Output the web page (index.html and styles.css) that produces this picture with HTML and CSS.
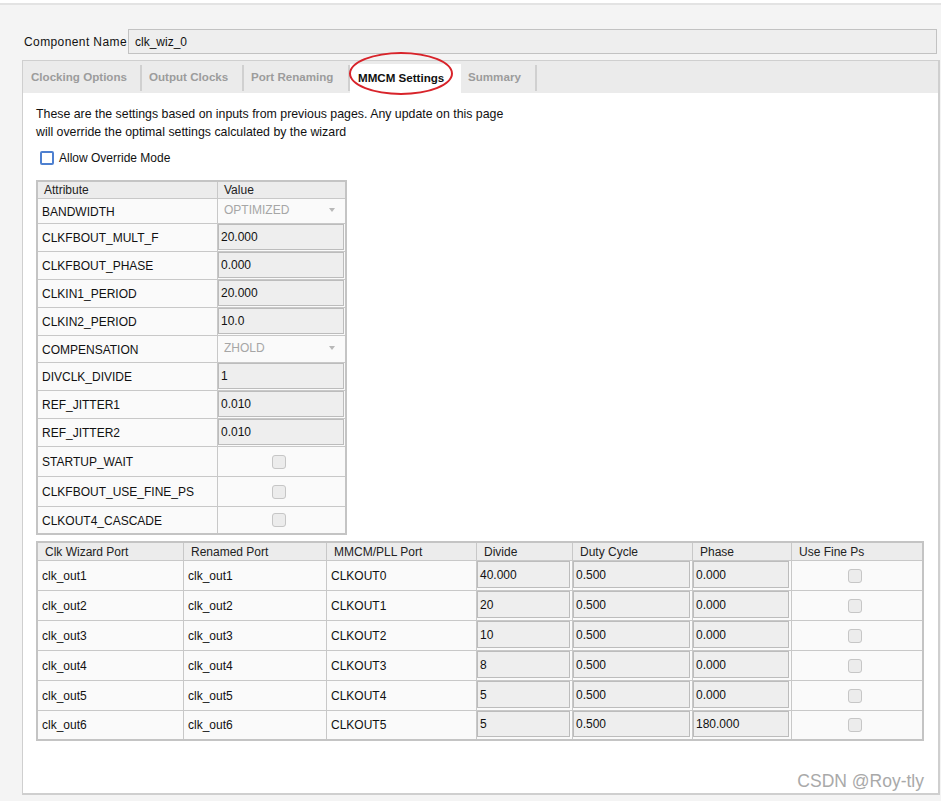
FILE: index.html
```html
<!DOCTYPE html>
<html>
<head>
<meta charset="utf-8">
<link rel="stylesheet" href="styles.css">
</head>
<body>
<div class="topbar"></div>
<div class="wrap">
  <div class="name-row">
    <div class="name-label">Component Name</div>
    <div class="name-input">clk_wiz_0</div>
  </div>
  <div class="panel">
    <div class="tabs">
      <div class="tab t1">Clocking Options</div><span class="sep"></span>
      <div class="tab t2">Output Clocks</div><span class="sep"></span>
      <div class="tab t3">Port Renaming</div><span class="sep"></span>
      <div class="tab t4">MMCM Settings</div>
      <div class="tab t5">Summary</div><span class="sep"></span>
    </div>
    <div class="ellipse"></div>
    <div class="content">
      <p class="intro">These are the settings based on inputs from previous pages. Any update on this page<br>will override the optimal settings calculated by the wizard</p>
      <div class="override"><span class="cb-blue"></span>Allow Override Mode</div>

      <div class="attr">
        <div class="arow ahead h17"><div>Attribute</div><div class="hv">Value</div></div>
        <div class="arow h25"><div>BANDWIDTH</div><div class="dd"><span>OPTIMIZED</span><span class="arrow"></span></div></div>
        <div class="arow h28"><div>CLKFBOUT_MULT_F</div><div class="fc"><div class="field">20.000</div></div></div>
        <div class="arow h28"><div>CLKFBOUT_PHASE</div><div class="fc"><div class="field">0.000</div></div></div>
        <div class="arow h28"><div>CLKIN1_PERIOD</div><div class="fc"><div class="field">20.000</div></div></div>
        <div class="arow h28"><div>CLKIN2_PERIOD</div><div class="fc"><div class="field">10.0</div></div></div>
        <div class="arow h27"><div>COMPENSATION</div><div class="dd"><span>ZHOLD</span><span class="arrow"></span></div></div>
        <div class="arow h28"><div>DIVCLK_DIVIDE</div><div class="fc"><div class="field">1</div></div></div>
        <div class="arow h28"><div>REF_JITTER1</div><div class="fc"><div class="field">0.010</div></div></div>
        <div class="arow h28"><div>REF_JITTER2</div><div class="fc"><div class="field">0.010</div></div></div>
        <div class="arow h30"><div>STARTUP_WAIT</div><div class="cc"><span class="chk"></span></div></div>
        <div class="arow h30"><div>CLKFBOUT_USE_FINE_PS</div><div class="cc"><span class="chk"></span></div></div>
        <div class="arow h26"><div>CLKOUT4_CASCADE</div><div class="cc"><span class="chk"></span></div></div>
      </div>

      <div class="ports">
        <div class="prow phead"><div>Clk Wizard Port</div><div>Renamed Port</div><div>MMCM/PLL Port</div><div>Divide</div><div>Duty Cycle</div><div>Phase</div><div class="uh">Use Fine Ps</div></div>
        <div class="prow"><div>clk_out1</div><div>clk_out1</div><div>CLKOUT0</div><div class="fc"><div class="field">40.000</div></div><div class="fc"><div class="field">0.500</div></div><div class="fc"><div class="field">0.000</div></div><div class="cc"><span class="chk"></span></div></div>
        <div class="prow"><div>clk_out2</div><div>clk_out2</div><div>CLKOUT1</div><div class="fc"><div class="field">20</div></div><div class="fc"><div class="field">0.500</div></div><div class="fc"><div class="field">0.000</div></div><div class="cc"><span class="chk"></span></div></div>
        <div class="prow"><div>clk_out3</div><div>clk_out3</div><div>CLKOUT2</div><div class="fc"><div class="field">10</div></div><div class="fc"><div class="field">0.500</div></div><div class="fc"><div class="field">0.000</div></div><div class="cc"><span class="chk"></span></div></div>
        <div class="prow"><div>clk_out4</div><div>clk_out4</div><div>CLKOUT3</div><div class="fc"><div class="field">8</div></div><div class="fc"><div class="field">0.500</div></div><div class="fc"><div class="field">0.000</div></div><div class="cc"><span class="chk"></span></div></div>
        <div class="prow"><div>clk_out5</div><div>clk_out5</div><div>CLKOUT4</div><div class="fc"><div class="field">5</div></div><div class="fc"><div class="field">0.500</div></div><div class="fc"><div class="field">0.000</div></div><div class="cc"><span class="chk"></span></div></div>
        <div class="prow plast"><div>clk_out6</div><div>clk_out6</div><div>CLKOUT5</div><div class="fc"><div class="field">5</div></div><div class="fc"><div class="field">0.500</div></div><div class="fc"><div class="field">180.000</div></div><div class="cc"><span class="chk"></span></div></div>
      </div>
    </div>
  </div>
</div>
<div class="watermark">CSDN @Roy-tly</div>
</body>
</html>
```

FILE: styles.css
```css
* { box-sizing: border-box; }

body {
  margin: 0;
  width: 941px;
  height: 801px;
  overflow: hidden;
  position: relative;
  background: #f4f4f4;
  font-family: "Liberation Sans", Arial, sans-serif;
  font-size: 12px;
  color: #111;
}

.topbar {
  height: 5px;
  background: #fff;
  border-bottom: 2px solid #e3e3e3;
}

.wrap {
  padding: 24px 1px 0 22px;
}

.name-row {
  display: flex;
  height: 25px;
}

.name-label {
  width: 106px;
  padding-left: 2px;
  display: flex;
  align-items: center;
  letter-spacing: 0.4px;
  color: #111;
}

.name-input {
  flex: 1;
  margin-right: 3px;
  border: 1px solid #c2c2c2;
  background: #eeeeee;
  display: flex;
  align-items: center;
  padding-left: 6px;
}

.panel {
  margin-top: 6px;
  height: 735px;
  border: 1px solid #cfcfcf;
  border-right-width: 2px;
  border-bottom-width: 2px;
  position: relative;
  display: flex;
  flex-direction: column;
  background: #fff;
}

.tabs {
  height: 32px;
  flex: none;
  display: flex;
  background: #ebebeb;
}

.tab {
  flex: none;
  padding-left: 7px;
  font-weight: bold;
  font-size: 11.6px;
  line-height: 31px;
  color: #9c9c9c;
  white-space: nowrap;
}

.t1 { width: 117px; padding-left: 8px; }
.t2 { width: 100px; }
.t3 { width: 104px; }
.t4 {
  width: 111px;
  padding-left: 8px;
  margin-top: 3px;
  line-height: 28px;
  background: #fff;
  color: #111;
}
.t5 { width: 74px; }

.sep {
  flex: none;
  width: 2px;
  height: 26px;
  margin-top: 4px;
  background: #d0d0d0;
}

.ellipse {
  position: absolute;
  left: 326px;
  top: -9px;
  width: 104px;
  height: 43px;
  border: 2px solid #d8232a;
  border-radius: 50%;
}

.content {
  flex: 1;
  padding: 11px 0 0 13px;
  background: #fff;
}

.intro {
  margin: 0;
  font-size: 12.35px;
  line-height: 18px;
  padding-top: 1px;
}

.override {
  margin-top: 8px;
  height: 18px;
  display: flex;
  align-items: center;
}

.cb-blue {
  width: 14px;
  height: 14px;
  margin-left: 4px;
  margin-right: 5px;
  border: 2px solid #4e80d0;
  border-radius: 2px;
  background: #fff;
}

/* attribute table */
.attr {
  margin-top: 13px;
  width: 311px;
  border: 2px solid #c4c4c4;
  background: #fafafa;
}

.arow {
  display: grid;
  grid-template-columns: 180px 1fr;
  border-bottom: 1px solid #c8c8c8;
}

.arow:last-child { border-bottom: none; }

.arow > div:first-child {
  border-right: 1px solid #c8c8c8;
  padding-left: 4px;
  padding-top: 1px;
  display: flex;
  align-items: center;
}

.ahead { background: #ececec; color: #222; }
.ahead > div:first-child { padding-left: 6px; padding-top: 0; }
.hv { padding-left: 6px; display: flex; align-items: center; }

.h17 { height: 17px; }
.h25 { height: 25px; }
.h26 { height: 26px; }
.h27 { height: 27px; }
.h28 { height: 28px; }
.h30 { height: 30px; }

.dd {
  display: flex;
  align-items: center;
  justify-content: space-between;
  padding: 0 10px 3px 6px;
  color: #a6a6a6;
}

.arrow {
  width: 0;
  height: 0;
  border-left: 3.5px solid transparent;
  border-right: 3.5px solid transparent;
  border-top: 4px solid #b8b8b8;
}

.fc {
  padding: 0 1px 1px 0;
}

.field {
  width: 100%;
  height: 100%;
  border: 1px solid #bcbcbc;
  background: #eeeeee;
  padding-left: 2px;
  display: flex;
  align-items: center;
}

.cc {
  display: flex;
  align-items: center;
  justify-content: center;
  padding-right: 5px;
}

.chk {
  width: 14px;
  height: 14px;
  border: 1px solid #c6c6c6;
  border-radius: 3px;
  background: #ececec;
}

/* ports table */
.ports {
  margin-top: 6px;
  width: 888px;
  border: 2px solid #c4c4c4;
  background: #fafafa;
}

.prow {
  display: grid;
  grid-template-columns: 146px 143px 150px 96px 120px 99px 1fr;
  height: 30px;
  border-bottom: 1px solid #c8c8c8;
}

.prow > div {
  border-right: 1px solid #c8c8c8;
  padding-left: 4px;
  display: flex;
  align-items: center;
}

.prow > div:last-child { border-right: none; }

.prow > .fc {
  padding: 0 2px 2px 0;
}

.prow > .cc {
  justify-content: center;
  padding-left: 0;
  padding-right: 4px;
}

.phead {
  height: 18px;
  background: #ececec;
  color: #222;
}

.phead > div { padding-left: 7px; }
.prow > .uh { padding-left: 7px; }

.plast {
  height: 28px;
  border-bottom: none;
}

.watermark {
  position: absolute;
  right: 17px;
  top: 770px;
  font-size: 17.5px;
  line-height: 22px;
  color: #a9a9a9;
  font-family: "Liberation Sans", Arial, sans-serif;
}
```
